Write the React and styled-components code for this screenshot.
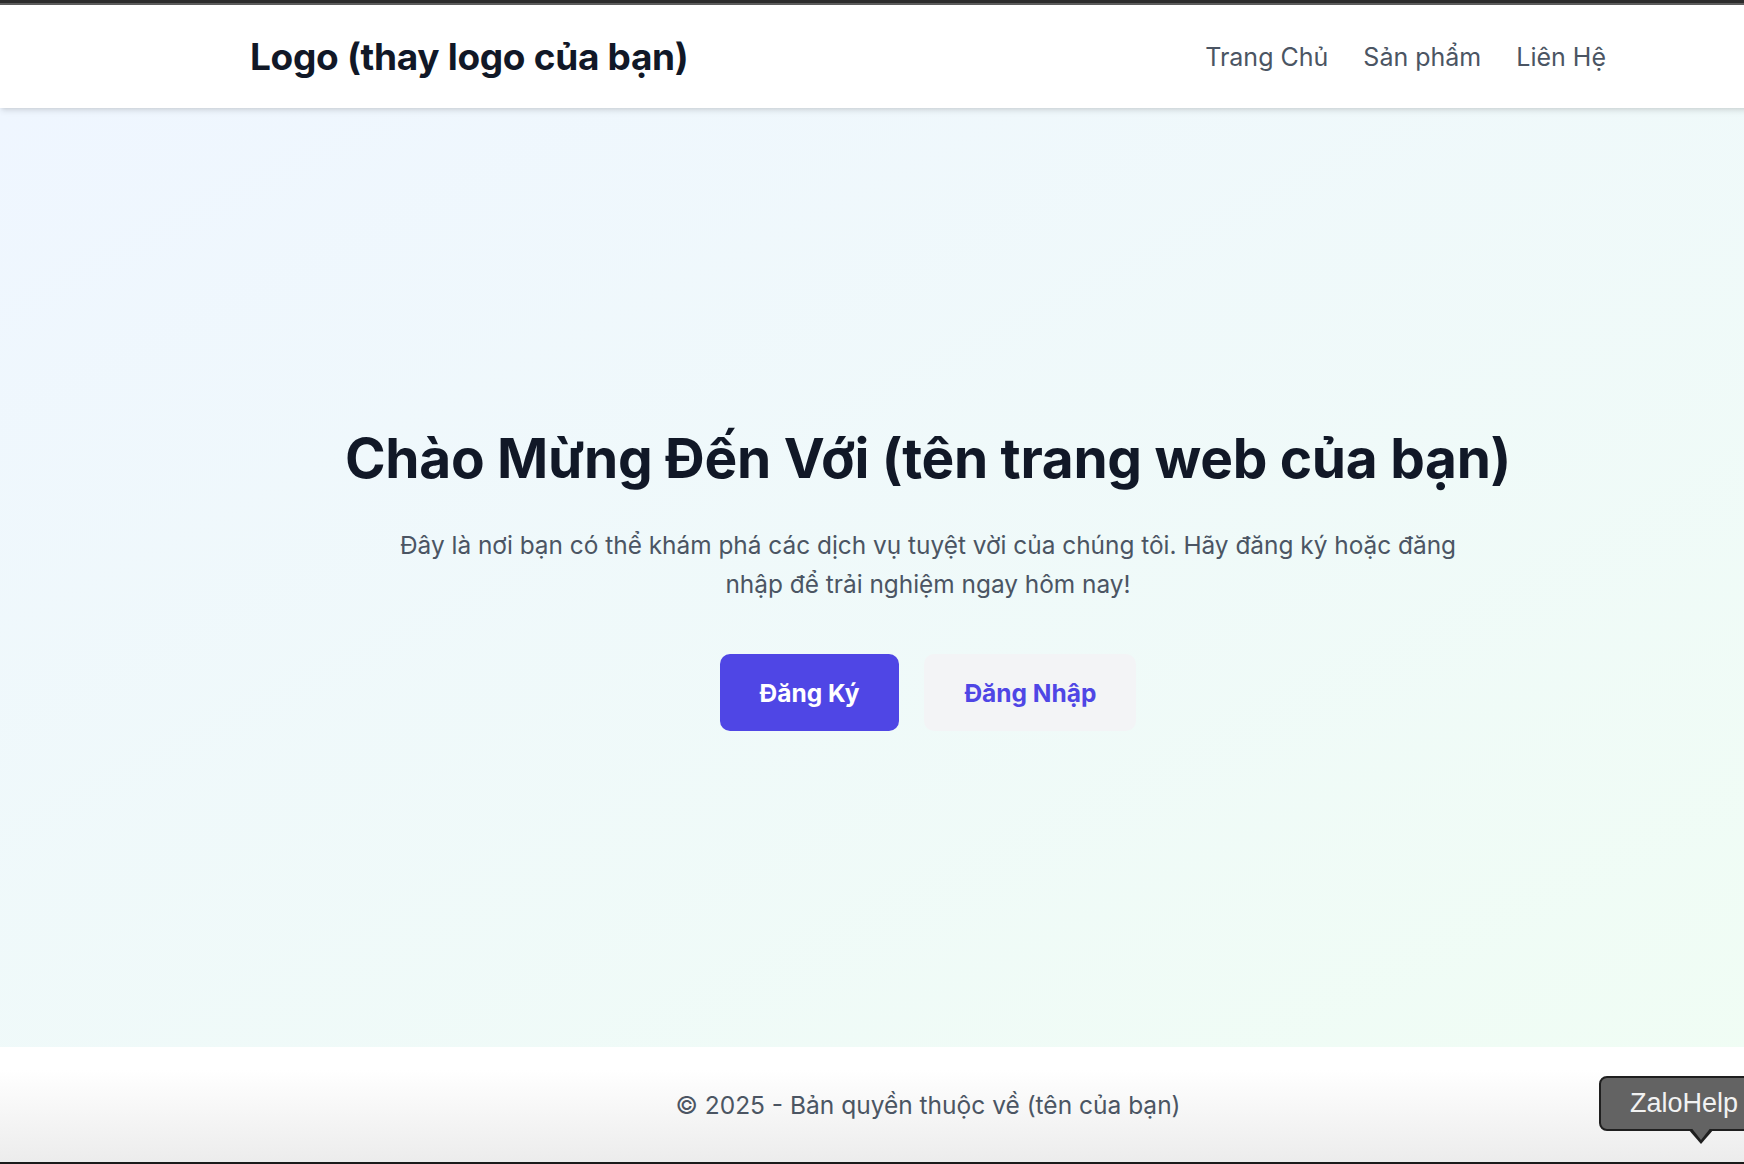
import styled, { createGlobalStyle } from "styled-components"

const GlobalStyle = createGlobalStyle`
    html, body {
        margin: 0;
        padding: 0;
        overflow: hidden;
        background: #ffffff;
    }
    * {
        box-sizing: border-box;
    }
`

const Page = styled.div`
    position: relative;
    width: 1856px;
    height: 1164px;
    display: flex;
    flex-direction: column;
    font-family: Inter, "Noto Sans", sans-serif;
    border-top: 3px solid #2c2c2c;
    border-bottom: 2px solid #1a1a1a;
`

const TopLine = styled.div`
    height: 2px;
    background: #5c5c5c;
`

const Header = styled.header`
    position: relative;
    z-index: 2;
    height: 103px;
    background: #ffffff;
    padding: 0 250px;
    display: flex;
    align-items: center;
    justify-content: space-between;
    box-shadow: 0 4px 6px -1px rgba(0, 0, 0, 0.1), 0 2px 4px -2px rgba(0, 0, 0, 0.1);
`

const Logo = styled.div`
    font-size: 37px;
    font-weight: 700;
    color: #111827;
    letter-spacing: -0.3px;
`

const Nav = styled.nav`
    display: flex;
    gap: 35px;

    a {
        font-size: 25px;
        color: #4b5563;
        text-decoration: none;
    }
`

const Hero = styled.main`
    flex: 1;
    display: flex;
    flex-direction: column;
    align-items: center;
    justify-content: center;
    text-align: center;
    background: linear-gradient(to bottom right, #eff6ff, #f0fdf4);
    padding-top: 4px;
`

const Title = styled.h1`
    margin: 0 0 38px;
    font-size: 55px;
    line-height: 1.1;
    font-weight: 700;
    color: #111827;
    letter-spacing: -0.3px;
`

const Lead = styled.p`
    margin: 0 0 50px;
    max-width: 1080px;
    font-size: 24.4px;
    line-height: 39px;
    color: #4b5563;
`

const Actions = styled.div`
    display: flex;
    gap: 25px;
`

const Button = styled.a`
    display: inline-flex;
    align-items: center;
    justify-content: center;
    height: 77px;
    padding: 0 40px;
    border-radius: 10px;
    font-size: 24.5px;
    font-weight: 700;
    text-decoration: none;
    background: ${(p) => (p.$primary ? "#4f46e5" : "#f3f4f6")};
    color: ${(p) => (p.$primary ? "#ffffff" : "#4f46e5")};
`

const Footer = styled.footer`
    height: 115px;
    display: flex;
    align-items: center;
    justify-content: center;
    background: linear-gradient(to bottom, #ffffff 20%, #ececec);
    font-size: 24.5px;
    color: #4b5563;
`

const ZaloTip = styled.div`
    position: absolute;
    left: 1599px;
    top: 1073px;
    height: 55px;
    padding: 0 30px 0 29px;
    display: flex;
    align-items: center;
    background: #636363;
    border: 2px solid #1f1f1f;
    border-radius: 8px;
    font-family: "Liberation Sans", Arial, sans-serif;
    font-size: 27px;
    color: #f2f2f2;

    &::before,
    &::after {
        content: "";
        position: absolute;
        left: 87px;
        width: 0;
        height: 0;
        border-left: 13px solid transparent;
        border-right: 13px solid transparent;
    }
    &::before {
        top: 100%;
        border-top: 15px solid #1f1f1f;
    }
    &::after {
        top: calc(100% - 3px);
        left: 89px;
        border-left-width: 11px;
        border-right-width: 11px;
        border-top: 14px solid #636363;
    }
`

const App = () => {
    return (
        <>
            <GlobalStyle />
            <Page>
                <TopLine />
                <Header>
                    <Logo>Logo (thay logo của bạn)</Logo>
                    <Nav>
                        <a href="#">Trang Chủ</a>
                        <a href="#">Sản phẩm</a>
                        <a href="#">Liên Hệ</a>
                    </Nav>
                </Header>
                <Hero>
                    <Title>Chào Mừng Đến Với (tên trang web của bạn)</Title>
                    <Lead>
                        Đây là nơi bạn có thể khám phá các dịch vụ tuyệt vời của chúng tôi. Hãy đăng ký hoặc đăng nhập để trải nghiệm ngay hôm nay!
                    </Lead>
                    <Actions>
                        <Button href="#" $primary>Đăng Ký</Button>
                        <Button href="#">Đăng Nhập</Button>
                    </Actions>
                </Hero>
                <Footer>© 2025 - Bản quyền thuộc về (tên của bạn)</Footer>
                <ZaloTip>ZaloHelp</ZaloTip>
            </Page>
        </>
    )
}

export default App
